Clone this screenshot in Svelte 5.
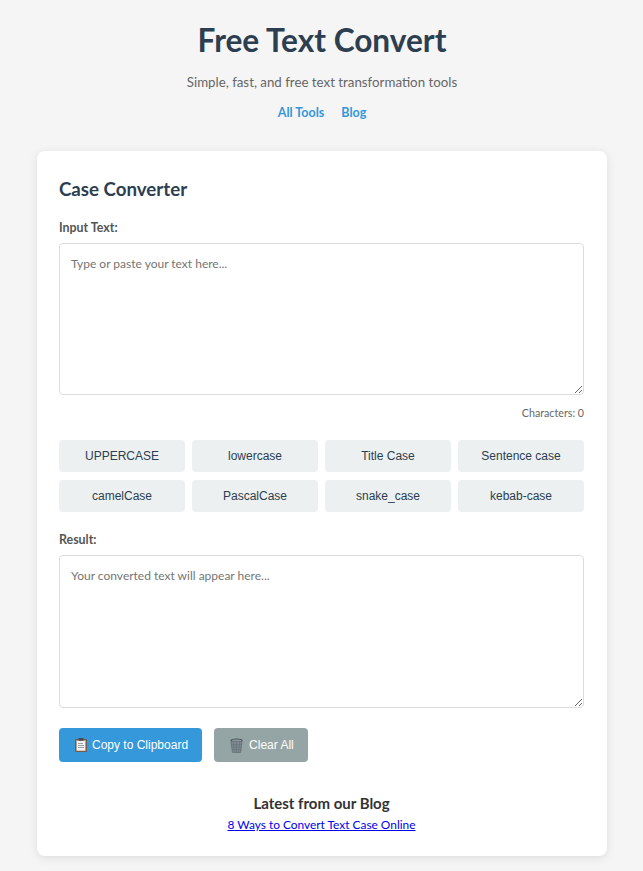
<script>
  const cases = ['UPPERCASE','lowercase','Title Case','Sentence case','camelCase','PascalCase','snake_case','kebab-case'];
</script>

<div class="page">
  <header>
    <h1>Free Text Convert</h1>
    <p class="sub">Simple, fast, and free text transformation tools</p>
    <nav><a href="#tools">All Tools</a><a href="#blog">Blog</a></nav>
  </header>
  <main class="card">
    <h2>Case Converter</h2>
    <label for="input">Input Text:</label>
    <textarea id="input" placeholder="Type or paste your text here..."></textarea>
    <div class="count">Characters: 0</div>
    <div class="grid">
      {#each cases as c}<button class="case">{c}</button>{/each}
    </div>
    <label for="result">Result:</label>
    <textarea id="result" class="tall" readonly placeholder="Your converted text will appear here..."></textarea>
    <div class="actions">
      <button class="act copy">
        <svg width="12" height="14" viewBox="0 0 12 14" aria-hidden="true">
          <rect x="0" y="1" width="12" height="13" rx="1" fill="#6a5242"/>
          <rect x="0.800" y="1.800" width="10.400" height="11.400" fill="#a98a70"/>
          <rect x="1.800" y="2.800" width="8.400" height="9.800" fill="#f1f2f3"/>
          <rect x="3.500" y="0" width="5" height="2.800" rx="0.600" fill="#454c52"/>
          <path d="M3 5.500h5M3 7.500h6M3 9.500h6" stroke="#9aa1a8" stroke-width="1"/>
        </svg>
        <span>Copy to Clipboard</span>
      </button>
      <button class="act clear">
        <svg width="13" height="15" viewBox="0 0 13 15" aria-hidden="true">
          <path d="M.8 2.500 2.300 13.800a1 1 0 0 0 1 .9h6.400a1 1 0 0 0 1-.9L12.200 2.500z" fill="#7d898f" stroke="#4f5a60" stroke-width="0.500"/>
          <path d="M3.500 4.500l1 10M6.500 4.500v10M9.500 4.500l-1 10M1.500 6.500h10M1.800 9h9.400M2.100 11.500h8.800" stroke="#626e74" stroke-width="0.500" fill="none"/>
          <ellipse cx="6.500" cy="2.300" rx="6" ry="1.800" fill="#4a555b"/>
          <ellipse cx="6.500" cy="2.400" rx="4.800" ry="1" fill="#8d999e"/>
        </svg>
        <span>Clear All</span>
      </button>
    </div>
    <section class="blog">
      <h3>Latest from our Blog</h3>
      <a href="#post">8 Ways to Convert Text Case Online</a>
    </section>
  </main>
</div>

<style>
  :global(body) {
    background: #f5f5f5;
    font-family: Lato, "Open Sans", sans-serif;
    color: #333;
  }
  .page { padding: 0 36px 15px 37px; }
  header { text-align: center; padding-top: 20px; }
  h1 { margin: 0; font-size: 31.600px; line-height: 41px; font-weight: 700; color: #2c3e50; }
  .sub { margin: 12px 0 0; font-size: 13.300px; line-height: 19px; color: #666; }
  nav { display: flex; justify-content: center; gap: 17px; margin-top: 11px; }
  nav a { font-size: 12.500px; line-height: 19px; font-weight: 700; color: #3498db; text-decoration: none; }
  .card {
    margin-top: 29px; background: #fff; border-radius: 8px; padding: 24px 23px 23px 22px;
    box-shadow: 0 2px 10px rgba(0,0,0,.1);
  }
  h2 { margin: 0 0 16px; font-size: 18.700px; line-height: 28px; font-weight: 700; color: #2c3e50; }
  label { display: block; font-size: 12.400px; line-height: 17px; font-weight: 700; color: #555; margin-bottom: 7px; }
  textarea {
    display: block; box-sizing: border-box; width: 100%; height: 152px; padding: 11px;
    border: 1px solid #ddd; border-radius: 4px; background: #fff; outline: none;
    font: 12px/17px Lato, "Open Sans", sans-serif; color: #333; resize: vertical;
  }
  .tall { height: 153px; }
  .count { margin-top: 9px; text-align: right; font-size: 10.700px; line-height: 17px; color: #666; }
  .grid { display: grid; grid-template-columns: repeat(4, 1fr); gap: 8px 7px; margin-top: 19px; margin-bottom: 19px; }
  button { font-family: "Liberation Sans", Arial, sans-serif; border: 0; border-radius: 4px; }
  .case { height: 32px; background: #ecf0f1; color: #2c3e50; font-size: 12px; }
  .actions { display: flex; gap: 12px; margin-top: 20px; }
  .act { display: flex; align-items: center; height: 34px; color: #fff; font-size: 12px; }
  .copy { background: #3498db; padding: 0 14px 0 16px; gap: 5px; }
  .clear { background: #95a5a6; padding: 0 14px 0 16px; gap: 6px; }
  .blog { margin-top: 32px; text-align: center; }
  h3 { margin: 0; font-size: 15px; line-height: 18px; font-weight: 700; color: #333; }
  .blog a { display: block; margin-top: 4px; font-size: 11.900px; line-height: 17px; color: #00e; text-decoration: underline; }
</style>
